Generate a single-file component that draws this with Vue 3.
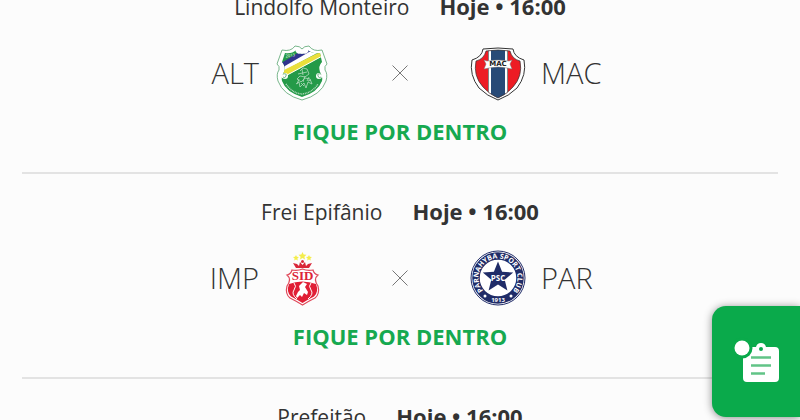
<script setup>
import { ref } from 'vue'

const matches = ref([
  { id: 1, venue: 'Lindolfo Monteiro', time: 'Hoje • 16:00', home: 'ALT', away: 'MAC' },
  { id: 2, venue: 'Frei Epifânio', time: 'Hoje • 16:00', home: 'IMP', away: 'PAR' },
  { id: 3, venue: 'Prefeitão', time: 'Hoje • 16:00', home: '', away: '' }
])
</script>

<template>
  <main class="page">
    <ul class="matches">
      <li v-for="match in matches" :key="match.id" class="match">
        <div class="info">
          <span>{{ match.venue }}</span>
          <strong>{{ match.time }}</strong>
        </div>

        <template v-if="match.home">
          <div class="teams">
            <span class="team home">{{ match.home }}</span>

            <svg v-if="match.home === 'ALT'" class="crest" viewBox="0 0 56 56" aria-hidden="true">
              <defs>
                <clipPath id="alt-shield">
                  <path d="M11 8Q18 9 22 5q3 4 6 4t6-4q4 4 12 3l2 9q-4 4-2 10 3 4 2 9-4 11-20 16Q12 47 8 36q-1-5 2-9 2-6-2-10Z" />
                </clipPath>
              </defs>
              <path
                d="M8 5Q17 7 21 1q5 0 7 3 2-3 7-3 4 6 13 4l5 14q-3 2-2 6 3 4 1 11-5 14-24 19Q9 50 4 36q-2-7 1-11 1-4-2-6Z"
                fill="#fff"
                stroke="#55a36d"
                stroke-width=".8"
              />
              <g clip-path="url(#alt-shield)">
                <path d="M0 0h56v56H0z" fill="#249a48" />
                <path d="M4 20 30 4 42 4 4 26Z" fill="#30358e" />
                <path d="M4 25 42 3 47 6 4 29Z" fill="#fff" />
                <path d="M4 28 48 6 52 9 4 35Z" fill="#eadf3c" />
                <path d="M4 35 52 9" stroke="#fff" />
              </g>
              <circle cx="11" cy="31" r="3" fill="#fff" />
              <circle cx="45" cy="31" r="3" fill="#fff" />
              <path d="M9 29q4-1 3 2t-3 1M47 29q-4-1-3 2t3 1" fill="none" stroke="#4aa064" stroke-width=".8" />
              <path d="M22 5q2 4 5 2M34 5q-2 4-5 2" fill="none" stroke="#fff" stroke-width="2" />
              <g fill="none" stroke="#b4dabe" stroke-width=".8">
                <path d="m26 26 3-3 4 1 2 5-4 3-5-1-3 3 4 3 4-4 5 1 2 5-4-2-2 6-2-5-4 4-1-5-3 2" />
                <path d="m28 24 1 6M24 29l9-2M31 31l-2 6M35 32l-2 4M25 34l-2 5M27 38l3 3M34 36l3-1" />
                <path d="M12 39q6 9 16 10 10-1 16-10" stroke-dasharray="1 .7" stroke-width="1.5" />
              </g>
              <text x="10" y="14" class="tiny">2013</text>
            </svg>

            <svg v-else class="crest" viewBox="0 0 56 56" aria-hidden="true">
              <path d="M28.500 2l1.200 2.500 2.800.3-2.100 1.900.6 2.800-2.500-1.400L26 9.500l.6-2.800-2.100-1.900 2.800-.3zM22 5l.9 1.800 2 .3-1.500 1.400.4 2-1.800-1-1.800 1 .4-2L19 7.100l2-.3zM35 5l.9 1.800 2 .3-1.500 1.400.4 2-1.800-1-1.800 1 .4-2L32 7.100l2-.3z" fill="#f4ed4c" />
              <path d="m22 18-3-5 4 1 2 2 1-4 2.500 3 2.500-3 1 4 2-2 4-1-3 5Z" fill="#d92639" />
              <circle cx="28.500" cy="11.500" r="1.500" fill="#d92639" />
              <path
                d="M18 20q6 1 10.500-1Q33 21 39 20q1 4 5 5-5 4 0 11 2 8-3 12-6 3-12.500 7Q22 51 16 48q-5-4-3-12 5-7 0-11 4-1 5-5Z"
                fill="#fff"
                stroke="#e0495a"
                stroke-width="1.200"
              />
              <path d="M15 34q13-5 27 0 3 8-2 12.500-6 3-11.500 6.500-5.500-3.500-11.500-6.500Q12 42 15 34Z" fill="#e01f36" />
              <path d="M20 33q3 3 0 7t3 9M37 33q-3 3 0 7t-3 9" fill="none" stroke="#fff" />
              <path d="m22 46 2-4 2-2-1-4 4-4 4 2-2 3 3 5-1 3-3-2-2 4-2-2-3 3Z" fill="#fff" />
              <text x="28.500" y="30" class="sid">SID</text>
            </svg>

            <svg class="versus" viewBox="0 0 16 16" aria-hidden="true">
              <path d="M.5.5l15 15M15.500.5l-15 15" />
            </svg>

            <svg v-if="match.away === 'MAC'" class="crest" viewBox="0 0 56 56" aria-hidden="true">
              <defs>
                <clipPath id="mac-shield">
                  <path d="M16 6q12-2 24 0 2 8 10 10 3 15-7 26-6 7-15 11-9-4-15-11Q3 31 6 16q8-2 10-10Z" />
                </clipPath>
              </defs>
              <path
                d="M13 4q15-2 30 0 1 8 11 11 3 15-7 28-8 8-19 12Q17 51 9 43-1 30 2 15 12 12 13 4Z"
                fill="#fff"
                stroke="#333"
                stroke-width="1"
              />
              <g clip-path="url(#mac-shield)">
                <path d="M0 0h56v56H0z" fill="#ed1c24" />
                <path d="M18 0h20v56H18z" fill="#fff" />
                <path d="M21 0h14v56H21z" fill="#284a77" />
                <path d="M18.500 0v56M37.500 0v56" stroke="#333" stroke-width=".6" />
              </g>
              <path d="M16 6q12-2 24 0 2 8 10 10 3 15-7 26-6 7-15 11-9-4-15-11Q3 31 6 16q8-2 10-10Z" fill="none" stroke="#333" stroke-width=".7" />
              <path d="m14 15 3 1q11-2 22 0l3-1-2 4 2 5-5-1q-9-2-18 0l-5 1 2-5Z" fill="#fff" stroke="#777" stroke-width=".5" />
              <text x="28" y="21" class="mac">MAC</text>
            </svg>

            <svg v-else class="crest" viewBox="0 0 56 56" aria-hidden="true">
              <defs>
                <path id="club-ring" d="M14.200 41.800A19.500 19.500 0 1 1 41.800 41.800" />
              </defs>
              <circle cx="28" cy="28" r="27" fill="#fff" stroke="#202c68" stroke-width="1" />
              <circle cx="28" cy="28" r="22" fill="none" stroke="#202c68" stroke-width="7.500" />
              <path d="M28 11.500l4.100 10.300 11.100.8-8.500 7.100 2.700 10.700-9.400-5.900-9.400 5.900 2.700-10.700-8.500-7.100 11.100-.8z" fill="#202c68" />
              <text class="ring"><textPath href="#club-ring" startOffset="50%">PARNAHYBA SPORT CLUB</textPath></text>
              <text x="28" y="31" class="psc">PSC</text>
              <text x="28" y="52" class="year">1913</text>
              <circle cx="15" cy="46" r="1.500" fill="#fff" />
              <circle cx="41" cy="46" r="1.500" fill="#fff" />
            </svg>

            <span class="team">{{ match.away }}</span>
          </div>
          <a href="#" class="more" @click.prevent>FIQUE POR DENTRO</a>
        </template>
      </li>
    </ul>

    <button type="button" class="news" aria-label="Notícias">
      <svg viewBox="0 0 48 48" aria-hidden="true">
        <path
          d="M13 12h9q1-4 5-4t5 4h9q4 0 4 4v27q0 4-4 4H13q-4 0-4-4V16q0-4 4-4Z"
          fill="#fff"
        />
        <circle cx="27" cy="14" r="2" fill="#0aaa4b" />
        <circle cx="8" cy="13" r="10.500" fill="#0aaa4b" />
        <circle cx="8" cy="13" r="7.500" fill="#fff" />
        <path d="M17 22.500h20M17 30.500h20M17 38.500h14" stroke="#61c487" stroke-width="2.500" />
      </svg>
    </button>
  </main>
</template>

<style scoped>
.page {
  height: 100vh;
  overflow: hidden;
  background: #fcfcfc;
  color: #333;
  font-family: 'Open Sans', sans-serif;
}

/* список прокручен, первая карточка видна частично */
.matches {
  list-style: none;
  margin: -31px 0 0;
  padding: 0 22px;
}

.match {
  display: flex;
  flex-direction: column;
  align-items: center;
  padding: 22px 0 26px;
  border-bottom: 2px solid #e3e3e3;
}

.info {
  display: flex;
  align-items: baseline;
  gap: 30px;
  height: 30px;
  font-size: 21px;
  line-height: 30px;
}

.info strong {
  font-size: 22px;
}

.teams {
  display: grid;
  grid-template-columns: 1fr 56px 110px 56px 1fr;
  column-gap: 15px;
  align-items: center;
  width: 100%;
  height: 56px;
  margin: 24px 0 15px;
}

.team {
  font-size: 29px;
  line-height: 40px;
  font-weight: 300;
}

.home {
  text-align: right;
}

.crest {
  width: 56px;
  height: 56px;
}

.versus {
  justify-self: center;
  width: 16px;
  height: 16px;
  fill: none;
  stroke: #777;
  stroke-width: 1;
}

.more {
  color: #16a950;
  font-size: 22px;
  line-height: 30px;
  font-weight: 700;
  text-decoration: none;
}

.tiny {
  font-size: 4px;
  fill: #fff;
  transform: rotate(-8deg);
}

.sid,
.mac,
.ring,
.psc,
.year {
  text-anchor: middle;
  font-weight: 700;
}

.sid {
  font-family: 'Liberation Serif', serif;
  font-size: 13px;
  fill: #dc2438;
}

.mac {
  font-family: 'DejaVu Sans', sans-serif;
  font-size: 7px;
  fill: #222;
}

.ring {
  font-size: 7px;
  fill: #fff;
}

.psc {
  font-size: 8px;
  fill: #fff;
}

.year {
  font-size: 6px;
  fill: #fff;
}

.news {
  position: fixed;
  right: 0;
  bottom: 3px;
  width: 88px;
  height: 111px;
  padding: 0 0 6px 4px;
  border: none;
  border-radius: 14px 0 0 14px;
  background: #0aaa4b;
  box-shadow: 0 1px 8px rgba(0, 0, 0, 0.45);
  cursor: pointer;
}

.news svg {
  display: block;
  width: 48px;
  height: 48px;
  margin: 0 auto;
}
</style>

<style>
body {
  margin: 0;
}
</style>
